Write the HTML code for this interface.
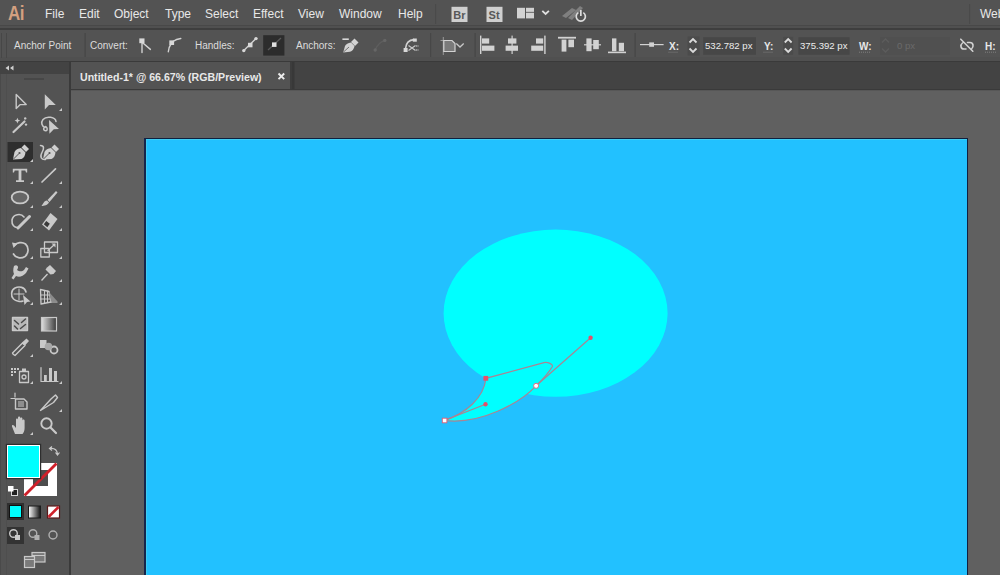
<!DOCTYPE html>
<html><head><meta charset="utf-8">
<style>
*{margin:0;padding:0;box-sizing:border-box}
html,body{width:1000px;height:575px;overflow:hidden;background:#535353;font-family:"Liberation Sans",sans-serif;position:relative}
.a{position:absolute}
.t{position:absolute;white-space:nowrap;color:#e6e6e6;line-height:1}
#menubar{left:0;top:0;width:1000px;height:25px;background:#535353}
.mi{font-size:12px;top:8px;color:#e8e8e8}
#ctrl{left:0;top:30px;width:1000px;height:31px;background:#535353}
.ct{font-size:10px;top:41px;color:#dcdcdc}
#tools{left:0;top:63px;width:69px;height:512px;background:#535353}
#toolhdr{left:0;top:62px;width:69px;height:12px;background:#434343}
#tabstrip{left:71px;top:62px;width:929px;height:27px;background:#434343}
#tab{left:71px;top:62px;width:219px;height:27px;background:#535353}
#paste{left:71px;top:91px;width:929px;height:484px;background:#606060}
#artboard{left:144px;top:138px;width:824px;height:440px;background:#22c1ff;border:1px solid #102040;border-left:2px solid #15264c;box-shadow:inset 1px 1px 0 #3fcdf2}
</style></head><body>
<div id="menubar" class="a"></div>
<div class="a" style="left:0;top:25px;width:1000px;height:1px;background:#484848"></div>
<div class="a" style="left:0;top:26px;width:1000px;height:2px;background:#505050"></div>
<div class="a" style="left:0;top:28px;width:1000px;height:2px;background:#3e3e3e"></div>
<div id="ctrl" class="a"></div>
<div class="a" style="left:0;top:57px;width:1000px;height:4px;background:#505050"></div><div class="a" style="left:0;top:61px;width:1000px;height:2px;background:#3a3a3a"></div>
<div id="tools" class="a"></div>
<div id="toolhdr" class="a"></div>
<div class="a" style="left:69px;top:62px;width:2px;height:513px;background:#3a3a3a"></div>
<div id="tabstrip" class="a"></div>
<div id="tab" class="a"></div>
<div class="a" style="left:290px;top:62px;width:5px;height:27px;background:#3d3d3d"></div><div class="a" style="left:292px;top:62px;width:1.5px;height:27px;background:#383838"></div>
<div class="a" style="left:71px;top:89px;width:929px;height:1px;background:#3a3a3a"></div><div class="a" style="left:71px;top:90px;width:929px;height:1px;background:#575757"></div>
<div id="paste" class="a"></div>
<div id="artboard" class="a"></div>

<svg class="a" style="left:0;top:0" width="1000" height="575" viewBox="0 0 1000 575">
<ellipse cx="555.6" cy="313.2" rx="112" ry="83.6" fill="#00ffff"/>
<path d="M444.5 420.4 C466 413 484 398 485.9 378.3 L544 362.6 C548 362 553 364 552.4 366.5 C548 374 542 380 536.1 385.8 C520 403 480 425 444.5 420.4 Z" fill="#00ffff" stroke="#aa8494" stroke-width="1.2"/>
<line x1="444.5" y1="420.4" x2="485.5" y2="404.3" stroke="#aa8494" stroke-width="1.2"/>
<line x1="536.1" y1="385.8" x2="590.6" y2="337.8" stroke="#aa8494" stroke-width="1.2"/>
<circle cx="485.5" cy="404.3" r="2.2" fill="#e4506a"/>
<circle cx="590.6" cy="337.8" r="2.2" fill="#e4506a"/>
<rect x="483.4" y="375.9" width="4.8" height="4.8" fill="#e8506a"/>
<rect x="442.3" y="418.2" width="4.6" height="4.6" fill="#fff" stroke="#e0607a" stroke-width="0.9"/>
<circle cx="536.1" cy="385.8" r="2.5" fill="#fff" stroke="#e0607a" stroke-width="0.9"/>
</svg>
<svg class="a" style="left:0;top:0" width="70" height="575" viewBox="0 0 70 575">
<defs>
<linearGradient id="gr1" x1="0" x2="1" y1="0" y2="0"><stop offset="0" stop-color="#e0e0e0"/><stop offset="1" stop-color="#3a3a3a"/></linearGradient>
<linearGradient id="gr2" x1="0" x2="1" y1="0" y2="0"><stop offset="0" stop-color="#ffffff"/><stop offset="1" stop-color="#111"/></linearGradient>
</defs>
<!-- panel edge lines -->
<rect x="0" y="74" width="1" height="501" fill="#4a4a4a"/>
<rect x="6" y="74" width="1" height="501" fill="#4e4e4e"/>
<rect x="24" y="78" width="20" height="2" fill="#474747"/>
<!-- collapse arrows -->
<path d="M9 65.5 L5.5 68 L9 70.5 Z M13.5 65.5 L10 68 L13.5 70.5 Z" fill="#d0d0d0"/>
<g fill="#c9c9c9" stroke="none">
<!-- corner triangles -->
<path d="M62 108 L62 111 L59 111 Z"/>
<path d="M33 159 L33 162 L30 162 Z"/>
<path d="M33 181 L33 184 L30 184 Z M62 181 L62 184 L59 184 Z"/>
<path d="M33 205 L33 208 L30 208 Z M62 205 L62 208 L59 208 Z"/>
<path d="M33 228 L33 231 L30 231 Z M62 228 L62 231 L59 231 Z"/>
<path d="M33 256 L33 259 L30 259 Z M62 256 L62 259 L59 259 Z"/>
<path d="M33 279 L33 282 L30 282 Z M62 279 L62 282 L59 282 Z"/>
<path d="M33 302 L33 305 L30 305 Z M62 302 L62 305 L59 305 Z"/>
<path d="M33 354 L33 357 L30 357 Z"/>
<path d="M33 381 L33 384 L30 384 Z M62 381 L62 384 L59 384 Z"/>
<path d="M62 409 L62 412 L59 412 Z"/>
<path d="M33 432 L33 435 L30 435 Z"/>
</g>
<g stroke="#c9c9c9" fill="none" stroke-width="1.4" stroke-linejoin="round" stroke-linecap="round">
<!-- selection -->
<path d="M16.2 94.6 V108.6 L20.3 104.6 H26.2 Z"/>
<!-- magic wand -->
<path d="M13.5 132 L24.5 121.5" stroke-width="2.2"/>
<!-- lasso -->
<path d="M56 121.5 C55.5 117 46.5 115.5 43 119.5 C40.5 122.5 42 126.5 45 127.5 M44.8 127 C42.8 128.5 43.5 131 46 130.8 C47.5 130.5 47.8 128 45.8 126.5" stroke-width="1.5"/>
<!-- curvature squiggle -->
<path d="M40.5 145.5 C44.5 145.5 44 149 42 152.5 C39.5 157 41.5 160 45.5 159.5" stroke-width="1.5"/>
<!-- line -->
<path d="M42 182 L55.5 168.8" stroke-width="1.7"/>
<!-- ellipse -->
<ellipse cx="20" cy="197.5" rx="8.3" ry="5.9" stroke-width="1.8" fill="#666"/>
<!-- shaper -->
<path d="M24 217 C21 213 13 214 12 220 C11.5 225 14.5 228 18 227.5" stroke-width="1.6"/>
<path d="M18 228 L29.5 216.5" stroke-width="3"/>
<!-- rotate -->
<path d="M14.5 245.5 C17 242.5 22 241.5 25.5 244 C29 247 29 253.5 25 256.5 C21 259 15.5 258 13.5 254" stroke-width="1.7"/>
<!-- scale -->
<rect x="40.8" y="248.5" width="8.5" height="8.5" stroke-width="1.3"/>
<rect x="44.5" y="242" width="13" height="10.5" stroke-width="1.3"/>
<path d="M48 250.5 L54.5 244.5" stroke-width="1.3"/>
<!-- shape builder -->
<path d="M26 292 C25 287 19 286 15 288 C11 290 10.5 296 13.5 299 C16 301.5 20.5 302 23 301" stroke-width="1.6"/>
<path d="M14 294 H24 M19 289 V300" stroke-width="1"/>
<!-- perspective grid -->
<path d="M40.5 289.5 L49 291.5 L51 302 L41 304 Z" stroke-width="1.3"/>
<path d="M44.5 290.5 V303 M47.5 291 V302.5 M40.5 295 H49.5 M40.5 299 H50.5" stroke-width="1"/>
<path d="M51 302 H57" stroke-width="1.2"/>
<!-- mesh -->
<rect x="12.5" y="317.5" width="15" height="13" stroke-width="1.4" fill="#b8b8b8"/>
<path d="M14.5 320.5 L18.5 324 M14.5 326 L17.5 329 M21.5 322.5 L25.5 319 M20.5 328.5 L25.5 324.5" stroke="#4a4a4a" stroke-width="1.5"/>
<!-- eyedropper -->
<path d="M13.5 354.5 L12.5 353 L22.5 343 L25 345.5 L15 355.5 Z" stroke-width="1.4"/>
<!-- blend ring -->
<circle cx="54" cy="350" r="3.5" stroke-width="1.8"/>
<!-- symbol sprayer can -->
<rect x="19.5" y="371.5" width="9" height="11" stroke-width="1.3"/>
<circle cx="24" cy="377" r="2" stroke-width="1.3"/>
<!-- graph -->
<path d="M41 367.5 V381.5 H58" stroke-width="1.2"/>
<!-- artboard -->
<path d="M15 393 V397 M11 398.5 H15" stroke-width="1.2"/>
<path d="M15.5 399 H24 L27 402 V409 H15.5 Z" stroke-width="1.4"/>
<!-- slice -->
<path d="M40.5 410.5 L51 399 L55.5 395 L57.5 397.5 L53.5 402.5 Z" stroke-width="1.4"/>
<!-- zoom -->
<circle cx="46.5" cy="423.5" r="5.2" stroke-width="1.9"/>
<path d="M50.5 427.5 L56 433" stroke-width="2.2"/>
</g>
<g fill="#c9c9c9">
<!-- direct selection -->
<path d="M44.8 94.2 V109.5 L49 104.9 H55.8 Z"/>
<!-- wand stars -->
<path d="M17.4 117.8 L18.2 119.8 L20.2 120.6 L18.2 121.4 L17.4 123.4 L16.6 121.4 L14.6 120.6 L16.6 119.8 Z"/>
<circle cx="25.2" cy="118.4" r="1.2"/><circle cx="26" cy="124.6" r="1.2"/>
<!-- lasso arrow -->
<path d="M49 120 L59 129 L53.8 129.3 L49.4 133.8 Z"/>
</g>
<!-- pen selected bg -->
<rect x="7.5" y="142" width="25.5" height="20" fill="#2e2e2e"/>
<path d="M33 159 L33 162 L30 162 Z" fill="#c9c9c9"/>
<g fill="#cfcfcf">
<path d="M13 159.5 L14.5 152 C15.5 149.5 18 148.5 21 148 L25.5 152.5 C25 155.5 24 158 21.5 159 Z"/>
<path d="M21.5 147.5 L24.5 144.5 L29 149 L26 152 Z"/>
<path d="M43 159.5 L44.5 152 C45.5 149.5 48 148.5 51 148 L55.5 152.5 C55 155.5 54 158 51.5 159 Z"/>
<path d="M51.5 147.5 L54.5 144.5 L59 149 L56 152 Z"/>
</g>
<path d="M13.5 159 L19 153.5 M43.5 159 L49 153.5" stroke="#555" stroke-width="1"/>
<circle cx="19.5" cy="153" r="1.1" fill="#555"/><circle cx="49.5" cy="153" r="1.1" fill="#555"/>
<g fill="#c9c9c9">
<!-- Type T -->
<path d="M12.8 168.8 H27.2 V172.5 H26 L25.3 170.6 H21.4 V180.2 H24 V182 H16 V180.2 H18.6 V170.6 H14.7 L14 172.5 H12.8 Z"/>
<!-- paintbrush -->
<path d="M56 191 L57.5 192.5 L49.5 202 L47.5 200 Z"/>
<path d="M47 200.5 L49 202.5 C48 205 44 206 41.5 206 C43 204.5 43.5 201 47 200.5 Z"/>
<!-- eraser -->
<path d="M42 224.5 L50.5 213 L57.5 219 L49 230.5 Z"/>
<path d="M43.8 224.3 L46.3 221 L49.8 223.8 L47.3 227.2 Z" fill="#3a3a3a"/>
<!-- rotate arrow head -->
<path d="M12 242.5 L17.5 243.5 L13.5 248 Z"/>
<!-- scale arrow head -->
<path d="M55.5 243.5 L55.5 247.5 L51.5 243.5 Z"/>
<!-- puppet -->
<path d="M14 266 C16 264.5 18.5 265.5 18 268 L17 270 C19 271.5 22 272 24 270 L26 267 L28.5 268.5 L26 273 C23 276.5 19 277.5 16 276 L13.5 279.5 L11.5 278 L14 274 C13 272 13 269 14 266 Z"/>
<!-- pin -->
<path d="M47 267.5 L50 265 L56 271 L53.5 274 L50.5 274.5 L45.5 269.5 Z"/>
<path d="M41 280 L47 273.5 L48 274.5 L42 281 Z"/>
<!-- shape builder arrow -->
<path d="M23 295 L30.5 301.5 L27 302 L24.5 305 Z"/>
<!-- perspective fade -->
<path d="M49 292 L57.5 301.5 L51 301.5 Z" fill="#8a8a8a"/>
<!-- blend -->
<rect x="40" y="340" width="6.5" height="8"/>
<circle cx="48.5" cy="346.5" r="3.8" fill="#a8a8a8"/>
<!-- eyedropper top -->
<path d="M22 342.5 L26.5 338.5 L29 341 L25 345.5 Z"/>
<!-- sprayer dots -->
<rect x="11" y="368" width="2" height="2"/><rect x="14" y="368" width="2" height="2"/><rect x="17" y="368" width="2" height="2"/>
<rect x="11" y="371" width="2" height="2"/><rect x="14" y="371" width="2" height="2"/>
<rect x="11" y="374" width="2" height="2"/>
<rect x="22" y="368.5" width="4" height="3"/>
<!-- graph bars -->
<rect x="44" y="375" width="2.8" height="6.5"/>
<rect x="49" y="368" width="3" height="13.5"/>
<rect x="54" y="371" width="3" height="10.5"/>
<!-- artboard fill -->
<rect x="18" y="401" width="6" height="6" fill="#8e8e8e"/>
<!-- hand -->
<path d="M15 434 L12 426.5 C11.5 425 13 424.5 14 425.5 L16 428 V419.5 C16 418 18 418 18 419.5 V425 V417.5 C18 416 20.2 416 20.2 417.5 V424.5 V418.5 C20.2 417 22.4 417 22.4 418.5 V425 V420.5 C22.4 419 24.6 419 24.6 420.5 V428 C24.6 431 23.5 433 22.5 434 Z"/>
</g>
<!-- gradient tool -->
<rect x="41.5" y="317.5" width="15" height="13.5" fill="url(#gr1)" stroke="#c9c9c9" stroke-width="1.2"/>
<!-- FILL / STROKE -->
<rect x="24" y="463" width="33" height="33" fill="#ffffff"/>
<rect x="33" y="470" width="15" height="16" fill="#4d4d4d"/>
<path d="M24.5 495.5 L56.5 463.5" stroke="#d0202a" stroke-width="2.8"/>
<rect x="5.8" y="443.8" width="35.4" height="35.4" fill="#2e2e2e"/><rect x="7" y="445" width="33" height="33" fill="#ffffff"/>
<rect x="8" y="446" width="31" height="31" fill="#00ffff"/>
<!-- swap arrows -->
<path d="M50 448.5 C54 448 57 450 57.5 454 M55.5 452.5 L57.5 455 L59.5 452.5 M52 446.5 L49.5 448.5 L52 450.5" stroke="#c9c9c9" stroke-width="1.2" fill="none"/>
<!-- default colors -->
<rect x="11.5" y="489.5" width="6" height="6" fill="#222" stroke="#d8d8d8" stroke-width="1"/>
<rect x="8" y="486" width="5.5" height="5.5" fill="#fff"/>
<!-- color mode buttons -->
<rect x="7" y="503" width="17" height="17" fill="#2f2f2f"/>
<rect x="9.5" y="505.5" width="12" height="12" fill="#00ffff" stroke="#111" stroke-width="1"/>
<rect x="28.5" y="506" width="12" height="12" fill="url(#gr2)" stroke="#1a1a1a" stroke-width="1"/>
<rect x="47.5" y="506" width="12" height="12" fill="#fff" stroke="#5a1a1a" stroke-width="1.2"/>
<path d="M48.5 517 L58.5 507" stroke="#d0202a" stroke-width="2.6"/>
<!-- draw modes -->
<rect x="7" y="527" width="17" height="17" fill="#333"/>
<circle cx="13.5" cy="533.5" r="3.8" fill="none" stroke="#c9c9c9" stroke-width="1.4"/>
<rect x="15" y="535" width="5" height="5" fill="#c9c9c9"/>
<circle cx="33" cy="533.5" r="3.8" fill="none" stroke="#b0b0b0" stroke-width="1.4"/>
<rect x="34.5" y="535" width="5" height="5" fill="#b0b0b0"/>
<circle cx="53" cy="535" r="4" fill="none" stroke="#b0b0b0" stroke-width="1.4"/>
<!-- screen mode -->
<rect x="32" y="552.5" width="13" height="9.5" fill="#7a7a7a" stroke="#c9c9c9" stroke-width="1.2"/>
<rect x="24.5" y="556.5" width="10" height="11" fill="#7a7a7a" stroke="#c9c9c9" stroke-width="1.2"/>
<path d="M32 555.5 H45 M24.5 559.5 H34.5" stroke="#c9c9c9" stroke-width="1"/>
</svg>
<svg class="a" style="left:0;top:0" width="1000" height="62" viewBox="0 0 1000 62">
<!-- Ai logo -->
<text x="8" y="20" font-family="Liberation Sans" font-weight="bold" font-size="17" fill="#d4a080" letter-spacing="-0.6" transform="translate(0 20) scale(1 1.2) translate(0 -20)">Ai</text>
<!-- menu separators -->
<rect x="435" y="4" width="1.2" height="20" fill="#4a4a4a"/>
<rect x="969" y="4" width="1.2" height="20" fill="#4a4a4a"/>
<!-- Br / St -->
<rect x="451.5" y="6.8" width="16" height="15.2" fill="#cfcfcf"/>
<text x="453.3" y="18.8" font-family="Liberation Sans" font-size="11" font-weight="bold" fill="#585858">Br</text>
<rect x="486.5" y="6.8" width="16" height="15.2" fill="#cfcfcf"/>
<text x="488.6" y="18.8" font-family="Liberation Sans" font-size="11" font-weight="bold" fill="#585858">St</text>
<!-- workspace -->
<rect x="517" y="7.8" width="8" height="10.6" fill="#d2d2d2"/>
<rect x="526" y="7.8" width="8" height="10.6" fill="#d2d2d2"/>
<rect x="526" y="11.8" width="8" height="1.2" fill="#777"/>
<path d="M542.3 10.8 L545.6 14 L548.9 10.8" stroke="#e0e0e0" stroke-width="1.8" fill="none"/>
<!-- sync/power -->
<path d="M562 16 L572 8 L576 10 L566 18 Z M568 18 L580 6 L583 8 L572 20 Z" fill="#7f7f7f"/>
<path d="M578.3 12.6 A4.6 4.6 0 1 0 583.3 12.6" fill="none" stroke="#dcdcdc" stroke-width="1.7"/>
<rect x="580" y="10" width="1.7" height="6" fill="#dcdcdc"/>
<!-- control bar grip -->
<rect x="1" y="33" width="1" height="25" fill="#474747"/>
<rect x="6" y="33" width="1" height="25" fill="#474747"/>
<!-- separators -->
<g fill="#474747">
<rect x="84.5" y="33" width="1.2" height="24"/>
<rect x="430" y="33" width="1.2" height="24"/>
<rect x="474.5" y="33" width="1.2" height="24"/>
<rect x="634.5" y="33" width="1.2" height="24"/>
</g>
<!-- convert icons -->
<g stroke="#d2d2d2" fill="none" stroke-width="1.4" stroke-linecap="round">
<path d="M142 43 V52.5 M143.2 43.2 L150.4 49.4"/>
<path d="M171.5 43 C169.5 46 168.5 48.5 168.3 51.8 M172.5 41.8 C175 40 177.5 38.8 180.8 38.5"/>
<path d="M243.8 50.6 L256 38.6"/>
</g>
<g fill="#d8d8d8">
<rect x="139.3" y="38.4" width="5.2" height="4.8"/>
<rect x="169.3" y="40.4" width="4.8" height="4.6"/>
<circle cx="243.8" cy="50.6" r="1.7"/><circle cx="256" cy="38.6" r="1.7"/>
<rect x="248" y="42.8" width="4.5" height="4.5"/>
</g>
<!-- selected handles button -->
<rect x="263.2" y="35.2" width="21.2" height="20.4" fill="#2c2c2c"/>
<path d="M268 50 L281 38" stroke="#5a5a5a" stroke-width="1.2"/>
<rect x="272" y="42.4" width="4.5" height="4.5" fill="#e0e0e0"/>
<!-- anchors: add/remove pen -->
<rect x="342.4" y="38.4" width="6.4" height="1.6" fill="#d8d8d8"/>
<path d="M343.2 52.5 L345 46 C346 44 348 43 351 42.5 L354.5 46 C354 49 352.5 51 350 51.8 Z" fill="#d2d2d2"/>
<path d="M351 42 L354.5 38.5 L358.5 42.5 L355 46 Z" fill="#d2d2d2"/>
<path d="M343.5 52 L349 47" stroke="#666" stroke-width="0.9"/>
<!-- disabled -->
<path d="M375.2 50 C377 45 380 42 384.8 40.4" stroke="#5e5e5e" stroke-width="1.2" fill="none"/>
<circle cx="375.2" cy="50" r="1.7" fill="#666"/><circle cx="384.8" cy="40.4" r="1.7" fill="#666"/>
<!-- cut path icon -->
<path d="M405.5 48.5 C406 43 409 40 414 39.6" stroke="#d2d2d2" stroke-width="1.6" fill="none"/>
<rect x="403.6" y="48" width="4" height="4" fill="#d8d8d8"/>
<rect x="412.8" y="38.5" width="4" height="3.2" fill="#d8d8d8"/>
<path d="M408.5 45.5 L415.5 50.5 M408.5 50.5 L415.5 45.5" stroke="#c8c8c8" stroke-width="1.2"/>
<path d="M416.5 45 V47 M418 45 V47 M416.5 49 V51 M418 49 V51" stroke="#a8a8a8" stroke-width="0.8"/>
<!-- artboard icon -->
<path d="M443.3 37 V55 M440.5 40.5 H445" stroke="#9a9a9a" stroke-width="1"/>
<path d="M443.8 40.5 H452 L455 43.5 V51.5 H443.8 Z" fill="#7a7a7a" stroke="#d2d2d2" stroke-width="1.2"/>
<path d="M456.3 43.6 L460 47 L463.7 43.6" stroke="#c8c8c8" stroke-width="1.3" fill="none"/>
</g>
<!-- align icons -->
<g fill="#d2d2d2">
<rect x="480" y="35.6" width="1.4" height="18.4"/>
<rect x="482" y="38.4" width="7.2" height="5.2"/>
<rect x="482" y="45.6" width="12.4" height="5.2"/>
<rect x="511.5" y="35.6" width="1.2" height="18.4"/>
<rect x="508" y="38.4" width="8.4" height="5.2"/>
<rect x="505.6" y="45.6" width="12.4" height="5.2"/>
<rect x="544.2" y="35.6" width="1.4" height="18.4"/>
<rect x="536" y="38.4" width="7.2" height="5.2"/>
<rect x="531.2" y="45.6" width="12" height="5.2"/>
<rect x="558" y="36.8" width="18" height="1.8"/>
<rect x="561.6" y="39.6" width="4.8" height="12"/>
<rect x="568.4" y="39.6" width="5.6" height="7.6"/>
<rect x="584" y="44.2" width="17" height="1.2"/>
<rect x="586.4" y="38.4" width="5.2" height="12.8"/>
<rect x="593.2" y="40" width="5.6" height="9.2"/>
<rect x="608" y="51.6" width="18" height="1.6"/>
<rect x="612" y="38.4" width="4.4" height="12.8"/>
<rect x="618.8" y="42.8" width="5.2" height="8.4"/>
<!-- distribute -->
<rect x="640" y="44" width="23.6" height="1.2"/>
<rect x="649.2" y="42.4" width="4.8" height="4.4"/>
</g>
<!-- spinners & inputs -->
<rect x="687.6" y="36.4" width="12" height="19.2" fill="#4b4b4b"/>
<path d="M689.5 42.5 L693 39 L696.5 42.5 M689.5 48.5 L693 52 L696.5 48.5" stroke="#dadada" stroke-width="1.8" fill="none"/>
<rect x="703.2" y="37.2" width="52.8" height="17.6" fill="#474747"/>
<rect x="783.2" y="36.8" width="10" height="18" fill="#4b4b4b"/>
<path d="M784.8 42.5 L788.2 39 L791.6 42.5 M784.8 48.5 L788.2 52 L791.6 48.5" stroke="#dadada" stroke-width="1.8" fill="none"/>
<rect x="798.4" y="37.2" width="51.2" height="17.6" fill="#474747"/>
<rect x="880" y="37.2" width="70" height="17.6" fill="#505050"/>
<path d="M882 42.5 L885.5 39 L889 42.5 M882 48.5 L885.5 52 L889 48.5" stroke="#5c5c5c" stroke-width="1.4" fill="none"/>
<!-- dotted underlines -->
<path d="M668.5 52.2 H678.5 M763.5 52.2 H773.5 M859 52.2 H871 M985 52.2 H996" stroke="#8a8a8a" stroke-width="0.8" stroke-dasharray="1 1"/>
<!-- link icon -->
<path d="M962.5 43 C960 45 960.5 49 964 49 H966 M967.5 42.5 H970 C973.5 42.5 974 47 971.5 49 M960.8 39.2 L972.8 51.2" stroke="#d2d2d2" stroke-width="1.6" fill="none" stroke-linecap="round"/>
</svg>
<!-- menu text -->
<div class="t mi" style="left:45px">File</div>
<div class="t mi" style="left:79px">Edit</div>
<div class="t mi" style="left:114px">Object</div>
<div class="t mi" style="left:165px">Type</div>
<div class="t mi" style="left:205px">Select</div>
<div class="t mi" style="left:253px">Effect</div>
<div class="t mi" style="left:298px">View</div>
<div class="t mi" style="left:339px">Window</div>
<div class="t mi" style="left:398px">Help</div>
<div class="t mi" style="left:980px">Web</div>

<!-- control text -->
<div class="t ct" style="left:14px">Anchor Point</div>
<div class="t ct" style="left:90px">Convert:</div>
<div class="t ct" style="left:195px">Handles:</div>
<div class="t ct" style="left:296px">Anchors:</div>

<div class="t ct" style="left:669px;top:41.6px;font-size:10px;font-weight:bold;color:#e8e8e8">X:</div>
<div class="t ct" style="left:764px;top:41.6px;font-size:10px;font-weight:bold;color:#e8e8e8">Y:</div>
<div class="t ct" style="left:859px;top:41.6px;font-size:10px;font-weight:bold;color:#e8e8e8">W:</div>
<div class="t ct" style="left:985px;top:41.6px;font-size:10px;font-weight:bold;color:#e8e8e8">H:</div>
<div class="t ct" style="left:705px;top:40.5px;font-size:9.6px;color:#ececec">532.782 px</div>
<div class="t ct" style="left:800px;top:40.5px;font-size:9.6px;color:#ececec">375.392 px</div>
<div class="t ct" style="left:897px;top:40.5px;font-size:9.6px;color:#6a6a6a">0 px</div>
<svg class="a" style="left:277px;top:72px" width="9" height="9"><path d="M1.5 1.5 L7.2 7.2 M7.2 1.5 L1.5 7.2" stroke="#ececec" stroke-width="1.9"/></svg>
<div class="t" style="left:80px;top:72px;font-size:10.6px;font-weight:bold;color:#e8e8e8">Untitled-1* @ 66.67% (RGB/Preview)</div>
</body></html>
